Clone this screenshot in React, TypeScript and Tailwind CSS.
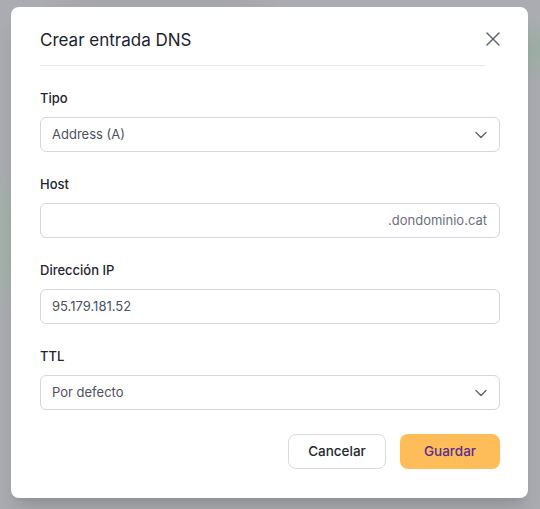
import { ChevronDown, X } from "lucide-react";

const fieldLabel = "h-5 mb-[9px] text-[13px] leading-5 font-medium text-[#1f2430]";
const boxBase =
  "h-[35px] w-full rounded-md border border-[#d6d6de] bg-white flex items-center pl-[11px] text-[13px] text-[#4b5160]";

function SelectBox({ value }: { value: string }) {
  return (
    <div className={`${boxBase} justify-between pr-2`}>
      <span>{value}</span>
      <ChevronDown className="w-5 h-5 text-[#5d6371]" strokeWidth={1.6} />
    </div>
  );
}

export default function App() {
  return (
    <div
      className="relative w-[540px] h-[509px] overflow-hidden bg-[#abacb1]"
      style={{ fontFamily: "Inter, 'Noto Sans', sans-serif" }}
    >
      {/* blurred page behind the overlay */}
      <div className="absolute left-[-20px] top-[180px] w-[40px] h-[120px] rounded-full bg-[#9db5a3] blur-lg opacity-60" />
      <div className="absolute right-[-20px] top-[30px] w-[40px] h-[40px] rounded-full bg-[#8fb39a] blur-md opacity-60" />
      <div className="absolute left-[60px] top-[-10px] w-[200px] h-[20px] bg-[#9fa0a6] blur-md opacity-70" />

      <div className="relative ml-[11px] mt-[7px] w-[517px] h-[491px] rounded-lg bg-white shadow-xl pl-[29px] pr-[28px]">
        <button className="absolute right-[23px] top-[20px] flex text-[#5d6371]">
          <X className="w-6 h-6" strokeWidth={1.4} />
        </button>

        <div className="pt-[20px] pb-[12px] w-[445px] border-b border-[#e6e6ea]">
          <h2 className="text-[17px] leading-[26px] text-[#1c2230]">Crear entrada DNS</h2>
        </div>

        <div className="pt-[22px] flex flex-col gap-[22px]">
          <div>
            <div className={fieldLabel}>Tipo</div>
            <SelectBox value="Address (A)" />
          </div>
          <div>
            <div className={fieldLabel}>Host</div>
            <div className={`${boxBase} justify-end pr-3 text-[#6b7080]`}>.dondominio.cat</div>
          </div>
          <div>
            <div className={fieldLabel}>Dirección IP</div>
            <div className={boxBase}>95.179.181.52</div>
          </div>
          <div>
            <div className={fieldLabel}>TTL</div>
            <SelectBox value="Por defecto" />
          </div>
        </div>

        <div className="mt-[24px] flex justify-end gap-[14px]">
          <button className="w-[98px] h-[35px] rounded-lg border border-[#d9d9e1] bg-white text-[13.5px] font-medium text-[#23252f]">
            Cancelar
          </button>
          <button className="w-[100px] h-[35px] rounded-lg bg-[#febd59] text-[13.5px] font-medium text-[#5a2c91]">
            Guardar
          </button>
        </div>
      </div>
    </div>
  );
}
